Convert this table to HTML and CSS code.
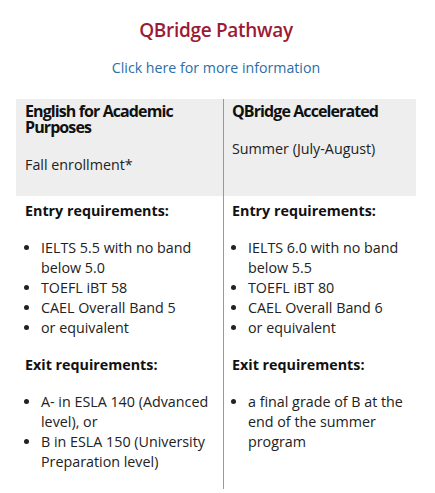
FILE: index.html
```html
<!DOCTYPE html>
<html>
<head>
<meta charset="utf-8">
<link rel="stylesheet" href="styles.css">
</head>
<body>
<div class="page">
  <h2 class="title">QBridge Pathway</h2>
  <p class="more"><a href="#">Click here for more information</a></p>
  <div class="grid">
    <div class="cell head left">
      <h3>English for Academic Purposes</h3>
      <p>Fall enrollment*</p>
    </div>
    <div class="cell head">
      <h3>QBridge Accelerated</h3>
      <p>Summer (July-August)</p>
    </div>
    <div class="cell body left">
      <p class="label">Entry requirements:</p>
      <ul>
        <li>IELTS 5.5 with no band below 5.0</li>
        <li>TOEFL iBT 58</li>
        <li>CAEL Overall Band 5</li>
        <li>or equivalent</li>
      </ul>
      <p class="label">Exit requirements:</p>
      <ul>
        <li>A- in ESLA 140 (Advanced level), or</li>
        <li>B in ESLA 150 (University Preparation level)</li>
      </ul>
    </div>
    <div class="cell body">
      <p class="label">Entry requirements:</p>
      <ul>
        <li>IELTS 6.0 with no band below 5.5</li>
        <li>TOEFL iBT 80</li>
        <li>CAEL Overall Band 6</li>
        <li>or equivalent</li>
      </ul>
      <p class="label">Exit requirements:</p>
      <ul>
        <li>a final grade of B at the end of the summer program</li>
      </ul>
    </div>
  </div>
</div>
</body>
</html>
```
FILE: styles.css
```css
html, body {
  margin: 0;
  padding: 0;
  background: #fff;
}
body {
  font-family: "Open Sans", "Liberation Sans", sans-serif;
  font-size: 14.3px;
  line-height: 20px;
  color: #222;
}
.page {
  width: 400px;
  margin: 0 16px;
}
.title {
  margin: 0;
  padding-top: 17px;
  font-size: 19px;
  line-height: 26px;
  font-weight: 600;
  letter-spacing: -0.3px;
  color: #9b1b34;
  text-align: center;
}
.more {
  margin: 0;
  padding-top: 15px;
  font-size: 14.2px;
  line-height: 20px;
  text-align: center;
}
.more a {
  color: #2a6ea6;
  text-decoration: none;
}
.grid {
  margin-top: 21px;
  display: grid;
  grid-template-columns: 208px 192px;
}
.cell {
  padding: 0 9px 0 8px;
}
.left {
  border-right: 1px solid #999;
  padding-left: 9px;
}
.head {
  background: #eeeeee;
  padding-top: 4px;
  padding-bottom: 21px;
}
.head h3 {
  margin: 0;
  font-size: 16px;
  line-height: 16px;
  font-weight: 700;
  letter-spacing: -0.9px;
  color: #111;
}
.head p {
  margin: 20px 0 0;
  font-size: 14.3px;
  line-height: 20px;
}
.body {
  padding-top: 5px;
}
.label {
  margin: 0 0 17px;
  font-weight: 700;
  color: #111;
}
ul {
  margin: 0 0 17px;
  padding-left: 16px;
}
li {
  margin: 0;
}
```
